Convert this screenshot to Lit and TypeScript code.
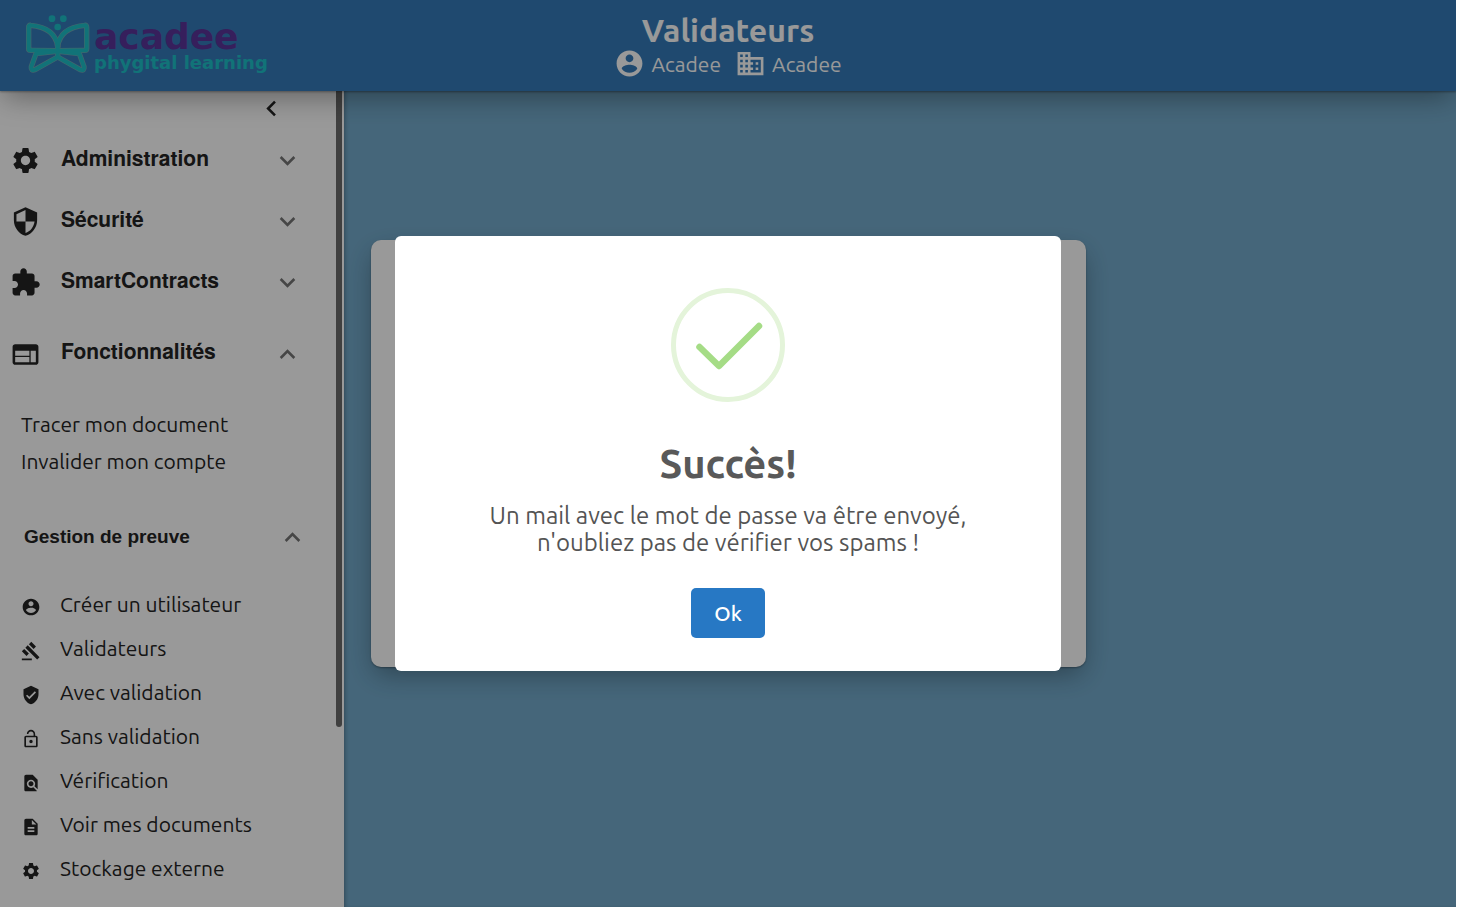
import { LitElement, html, svg, css } from "lit";
import { customElement, property, state } from "lit/decorators.js";

const ICONS: Record<string, string> = {
  settings:
    "M19.14 12.94c.04-.3.06-.61.06-.94 0-.32-.02-.64-.07-.94l2.03-1.58c.18-.14.23-.41.12-.61l-1.92-3.32c-.12-.22-.37-.29-.59-.22l-2.39.96c-.5-.38-1.03-.7-1.62-.94l-.36-2.54c-.04-.24-.24-.41-.48-.41h-3.84c-.24 0-.43.17-.47.41l-.36 2.54c-.59.24-1.13.57-1.62.94l-2.39-.96c-.22-.08-.47 0-.59.22L2.74 8.87c-.12.21-.08.47.12.61l2.03 1.58c-.05.3-.09.63-.09.94s.02.64.07.94l-2.03 1.58c-.18.14-.23.41-.12.61l1.92 3.32c.12.22.37.29.59.22l2.39-.96c.5.38 1.03.7 1.62.94l.36 2.54c.05.24.24.41.48.41h3.84c.24 0 .44-.17.47-.41l.36-2.54c.59-.24 1.13-.56 1.62-.94l2.39.96c.22.08.47 0 .59-.22l1.92-3.32c.12-.22.07-.47-.12-.61l-2.01-1.58zM12 15.6c-1.98 0-3.6-1.62-3.6-3.6s1.62-3.6 3.6-3.6 3.6 1.62 3.6 3.6-1.62 3.6-3.6 3.6z",
  security:
    "M12 1L3 5v6c0 5.55 3.84 10.74 9 12 5.16-1.26 9-6.45 9-12V5l-9-4zm0 10.99h7c-.53 4.12-3.28 7.79-7 8.94V12H5V6.3l7-3.11v8.8z",
  extension:
    "M20.5 11H19V7c0-1.1-.9-2-2-2h-4V3.5C13 2.12 11.88 1 10.5 1S8 2.12 8 3.5V5H4c-1.1 0-1.99.9-1.99 2v3.8H3.5c1.49 0 2.7 1.21 2.7 2.7s-1.21 2.7-2.7 2.7H2V20c0 1.1.9 2 2 2h3.8v-1.5c0-1.49 1.21-2.7 2.7-2.7 1.49 0 2.7 1.21 2.7 2.7V22H17c1.1 0 2-.9 2-2v-4h1.5c1.38 0 2.5-1.12 2.5-2.5S21.88 11 20.5 11z",
  web: "M20 4H4c-1.1 0-1.99.9-1.99 2L2 18c0 1.1.9 2 2 2h16c1.1 0 2-.9 2-2V6c0-1.1-.9-2-2-2zm-5 14H4v-4h11v4zm0-5H4V9h11v4zm5 5h-4V9h4v9z",
  account:
    "M12 2C6.48 2 2 6.48 2 12s4.48 10 10 10 10-4.48 10-10S17.52 2 12 2zm0 3c1.66 0 3 1.34 3 3s-1.34 3-3 3-3-1.34-3-3 1.34-3 3-3zm0 14.2c-2.5 0-4.71-1.28-6-3.22.03-1.99 4-3.08 6-3.08 1.99 0 5.97 1.09 6 3.08-1.29 1.94-3.5 3.22-6 3.22z",
  business:
    "M12 7V3H2v18h20V7H12zM6 19H4v-2h2v2zm0-4H4v-2h2v2zm0-4H4V9h2v2zm0-4H4V5h2v2zm4 12H8v-2h2v2zm0-4H8v-2h2v2zm0-4H8V9h2v2zm0-4H8V5h2v2zm10 12h-8v-2h2v-2h-2v-2h2v-2h-2V9h8v10zm-2-8h-2v2h2v-2zm0 4h-2v2h2v-2z",
  gavel:
    "M1 21h12v2H1zM5.245 8.07l2.83-2.827 14.14 14.142-2.828 2.828zM12.317 1l5.657 5.656-2.83 2.83-5.654-5.66zM3.825 9.485l5.657 5.657-2.828 2.828-5.657-5.657z",
  verified:
    "M12 1L3 5v6c0 5.55 3.84 10.74 9 12 5.16-1.26 9-6.45 9-12V5l-9-4zm-2 16l-4-4 1.41-1.41L10 14.17l6.59-6.59L18 9l-8 8z",
  lockOpen:
    "M12 17c1.1 0 2-.9 2-2s-.9-2-2-2-2 .9-2 2 .9 2 2 2zm6-9h-1V6c0-2.76-2.24-5-5-5S7 3.24 7 6h1.9c0-1.71 1.39-3.1 3.1-3.1 1.71 0 3.1 1.39 3.1 3.1v2H6c-1.1 0-2 .9-2 2v10c0 1.1.9 2 2 2h12c1.1 0 2-.9 2-2V10c0-1.1-.9-2-2-2zm0 12H6V10h12v10z",
  findInPage:
    "M20 19.59V8l-6-6H6c-1.1 0-1.99.9-1.99 2L4 20c0 1.1.89 2 1.99 2H18c.45 0 .85-.15 1.19-.4l-4.43-4.43c-.8.52-1.74.83-2.76.83-2.76 0-5-2.24-5-5s2.24-5 5-5 5 2.24 5 5c0 1.02-.31 1.96-.83 2.75L20 19.59zM9 13c0 1.66 1.34 3 3 3s3-1.34 3-3-1.34-3-3-3-3 1.34-3 3z",
  description:
    "M14 2H6c-1.1 0-1.99.9-1.99 2L4 20c0 1.1.89 2 1.99 2H18c1.1 0 2-.9 2-2V8l-6-6zm2 16H8v-2h8v2zm0-4H8v-2h8v2zm-3-5V3.5L18.5 9H13z",
  expandMore: "M16.59 8.59L12 13.17 7.41 8.59 6 10l6 6 6-6z",
  expandLess: "M12 8l-6 6 1.41 1.41L12 10.83l4.59 4.58L18 14z",
  chevronLeft: "M15.41 7.41L14 6l-6 6 6 6 1.41-1.41L10.83 12z",
};

@customElement("md-icon")
export class MdIcon extends LitElement {
  @property() name = "";
  static styles = css`
    :host {
      display: inline-flex;
      flex: none;
      width: 31px;
      height: 31px;
    }
    svg {
      width: 100%;
      height: 100%;
      fill: currentColor;
    }
  `;
  render() {
    return html`<svg viewBox="0 0 24 24" aria-hidden="true">
      ${svg`<path d=${ICONS[this.name] ?? ""}></path>`}
    </svg>`;
  }
}

const SECTIONS = [
  { icon: "settings", label: "Administration" },
  { icon: "security", label: "Sécurité" },
  { icon: "extension", label: "SmartContracts" },
];

const PROOF_LINKS = [
  { icon: "account", label: "Créer un utilisateur" },
  { icon: "gavel", label: "Validateurs" },
  { icon: "verified", label: "Avec validation" },
  { icon: "lockOpen", label: "Sans validation" },
  { icon: "findInPage", label: "Vérification" },
  { icon: "description", label: "Voir mes documents" },
  { icon: "settings", label: "Stockage externe" },
];

const WINGS = [
  "M101 104C96 62 62 44 20 40Q14 39 14 46V110Q14 115 20 115L98 116",
  "M101 104C106 62 140 44 182 40Q188 39 188 46V110Q188 115 182 115L104 116",
  "M98 118L36 125L22 164Q20 177 33 173L101 135V104",
  "M104 118L166 125L180 164Q182 177 169 173L101 135",
];

@customElement("app-root")
export class AppRoot extends LitElement {
  @state() private open = true;

  static styles = css`
    :host {
      --raised: 0 10px 28px -4px rgba(0, 0, 0, 0.36), 0 1px 2px rgba(0, 0, 0, 0.3);
      display: block;
      box-sizing: border-box;
      height: 100vh;
      padding: 0 4px 3px 0;
      background: #fff;
      color: #242424;
      font-family: Ubuntu, "Noto Sans", sans-serif;
      font-size: 21px;
      line-height: 24px;
    }
    * {
      box-sizing: border-box;
    }
    button {
      border: 0;
      padding: 0;
      background: none;
      color: inherit;
      font: inherit;
      cursor: pointer;
    }
    a {
      color: inherit;
      text-decoration: none;
    }
    .page {
      position: relative;
      display: flex;
      flex-direction: column;
      height: 100%;
      overflow: hidden;
    }
    .header {
      position: relative;
      z-index: 1;
      display: grid;
      grid-template-columns: 1fr auto 1fr;
      flex: none;
      height: 91px;
      padding: 0 24px;
      background: #357bba;
      color: #fff;
      box-shadow: var(--raised);
    }
    .logo {
      display: flex;
      align-items: flex-start;
      gap: 4px;
      padding-top: 12px;
      font-family: "DejaVu Sans", sans-serif;
      font-weight: bold;
    }
    .logo svg {
      width: 66px;
      height: 63px;
    }
    .brand {
      display: flex;
      flex-direction: column;
      padding-top: 8px;
    }
    .brand-name {
      color: #5a3499;
      font-size: 36px;
      line-height: 34px;
    }
    .brand-tag {
      color: #1dc0c8;
      font-size: 18px;
      line-height: 18px;
      white-space: nowrap;
    }
    .heading {
      display: flex;
      flex-direction: column;
      align-items: center;
      padding-top: 12px;
    }
    h1 {
      margin: 0;
      font-size: 32px;
      line-height: 36px;
    }
    .who {
      display: flex;
      gap: 14px;
    }
    .who span {
      display: flex;
      align-items: center;
      gap: 6px;
    }
    .body {
      display: flex;
      flex: 1;
      min-height: 0;
    }
    .sidebar {
      position: relative;
      flex: none;
      width: 344px;
      overflow: hidden;
      background: #fff;
    }
    .thumb {
      position: absolute;
      top: 0;
      right: 2px;
      width: 6px;
      height: 78%;
      border-radius: 0 0 3px 3px;
      background: #6c6c6c;
    }
    .collapse {
      display: flex;
      justify-content: flex-end;
      height: 39px;
      padding-right: 57px;
    }
    .section {
      display: flex;
      align-items: center;
      width: 100%;
      height: 61px;
      padding: 0 41px 0 10px;
      font-family: "Nimbus Sans", "TeX Gyre Heros", FreeSans, "Liberation Sans", Arial, sans-serif;
      font-size: 21px;
      font-weight: bold;
      text-align: left;
    }
    .section span {
      flex: 1;
      padding: 0 0 8px 20px;
    }
    .section .arrow {
      color: #757575;
    }
    .section.open {
      height: 82px;
    }
    .links {
      display: flex;
      flex-direction: column;
      padding: 11px 21px 21px;
      line-height: 37px;
    }
    .section.sub {
      height: 72px;
      padding: 0 36px 0 4px;
      font-family: "Liberation Sans", Arial, sans-serif;
      font-size: 19px;
    }
    .section.sub span {
      padding-bottom: 0;
    }
    .items {
      margin: 0;
      padding: 9px 0 0 21px;
      list-style: none;
    }
    .items a {
      display: flex;
      align-items: center;
      gap: 19px;
      height: 44px;
    }
    .items md-icon {
      width: 20px;
      height: 20px;
      margin-top: 6px;
    }
    .main {
      flex: 1;
      padding: 149px 27px;
      background: #74abcc;
      box-shadow: inset 3px 0 4px -2px rgba(0, 0, 0, 0.3);
    }
    .card {
      width: 68%;
      max-width: 715px;
      height: 427px;
      border-radius: 10px;
      background: #fff;
      box-shadow: var(--raised);
    }
    .overlay {
      position: absolute;
      inset: 0;
      z-index: 2;
      display: flex;
      align-items: center;
      justify-content: center;
      background: rgba(0, 0, 0, 0.4);
    }
    .modal {
      display: flex;
      flex-direction: column;
      align-items: center;
      width: 666px;
      max-width: 90%;
      padding: 52px 33px 33px;
      border-radius: 6px;
      background: #fff;
      color: #545454;
      text-align: center;
    }
    .tick {
      width: 114px;
      height: 114px;
    }
    h2 {
      margin: 38px 0 0;
      color: #595959;
      font-size: 40px;
      line-height: 48px;
    }
    .modal p {
      width: 520px;
      max-width: 100%;
      margin: 14px 0 32px;
      font-size: 24px;
      line-height: 27px;
    }
    .ok {
      height: 50px;
      padding: 0 23px;
      border-radius: 5px;
      background: #2778c4;
      color: #fff;
      font-size: 21px;
      font-weight: 500;
    }
  `;

  private renderLogo() {
    return html`<div class="logo">
      <svg viewBox="0 0 198 189" role="img" aria-label="Acadee">
        <g fill="none" stroke="#6fa9b4" stroke-width="16" stroke-linejoin="round" stroke-linecap="round">
          ${WINGS.map((d) => svg`<path d=${d}></path>`)}
        </g>
        <g fill="none" stroke="#1dc0c8" stroke-width="12" stroke-linejoin="round" stroke-linecap="round">
          ${WINGS.map((d) => svg`<path d=${d}></path>`)}
        </g>
        <g fill="#1dc0c8">
          <circle cx="84" cy="20" r="10"></circle>
          <circle cx="118" cy="20" r="10"></circle>
          <circle cx="101" cy="45" r="10"></circle>
        </g>
      </svg>
      <div class="brand">
        <span class="brand-name">acadee</span>
        <span class="brand-tag">phygital learning</span>
      </div>
    </div>`;
  }

  render() {
    return html`<div class="page">
      <header class="header">
        ${this.renderLogo()}
        <div class="heading">
          <h1>Validateurs</h1>
          <div class="who">
            <span><md-icon name="account"></md-icon>Acadee</span>
            <span><md-icon name="business"></md-icon>Acadee</span>
          </div>
        </div>
      </header>
      <div class="body">
        <nav class="sidebar">
          <div class="collapse">
            <button aria-label="Réduire le menu"><md-icon name="chevronLeft"></md-icon></button>
          </div>
          ${SECTIONS.map(
            (s) => html`<button class="section">
              <md-icon name=${s.icon}></md-icon><span>${s.label}</span
              ><md-icon class="arrow" name="expandMore"></md-icon>
            </button>`
          )}
          <button class="section open">
            <md-icon name="web"></md-icon><span>Fonctionnalités</span
            ><md-icon class="arrow" name="expandLess"></md-icon>
          </button>
          <div class="links">
            <a href="#tracer">Tracer mon document</a>
            <a href="#invalider">Invalider mon compte</a>
          </div>
          <button class="section sub">
            <span>Gestion de preuve</span><md-icon class="arrow" name="expandLess"></md-icon>
          </button>
          <ul class="items">
            ${PROOF_LINKS.map(
              (l) => html`<li>
                <a href="#"><md-icon name=${l.icon}></md-icon>${l.label}</a>
              </li>`
            )}
          </ul>
          <div class="thumb"></div>
        </nav>
        <main class="main"><div class="card"></div></main>
      </div>
      ${this.open
        ? html`<div class="overlay">
            <div class="modal" role="dialog" aria-modal="true" aria-labelledby="modal-title">
              <svg class="tick" viewBox="0 0 114 114" fill="none" aria-hidden="true">
                <circle cx="57" cy="57" r="54.5" stroke="#e4f4da" stroke-width="5"></circle>
                <path
                  d="M28.5 59L48 78L88 38"
                  stroke="#a5dc86"
                  stroke-width="6.5"
                  stroke-linecap="round"
                  stroke-linejoin="round"
                ></path>
              </svg>
              <h2 id="modal-title">Succès!</h2>
              <p>Un mail avec le mot de passe va être envoyé, n'oubliez pas de vérifier vos spams !</p>
              <button class="ok" @click=${() => (this.open = false)}>Ok</button>
            </div>
          </div>`
        : null}
    </div>`;
  }
}
